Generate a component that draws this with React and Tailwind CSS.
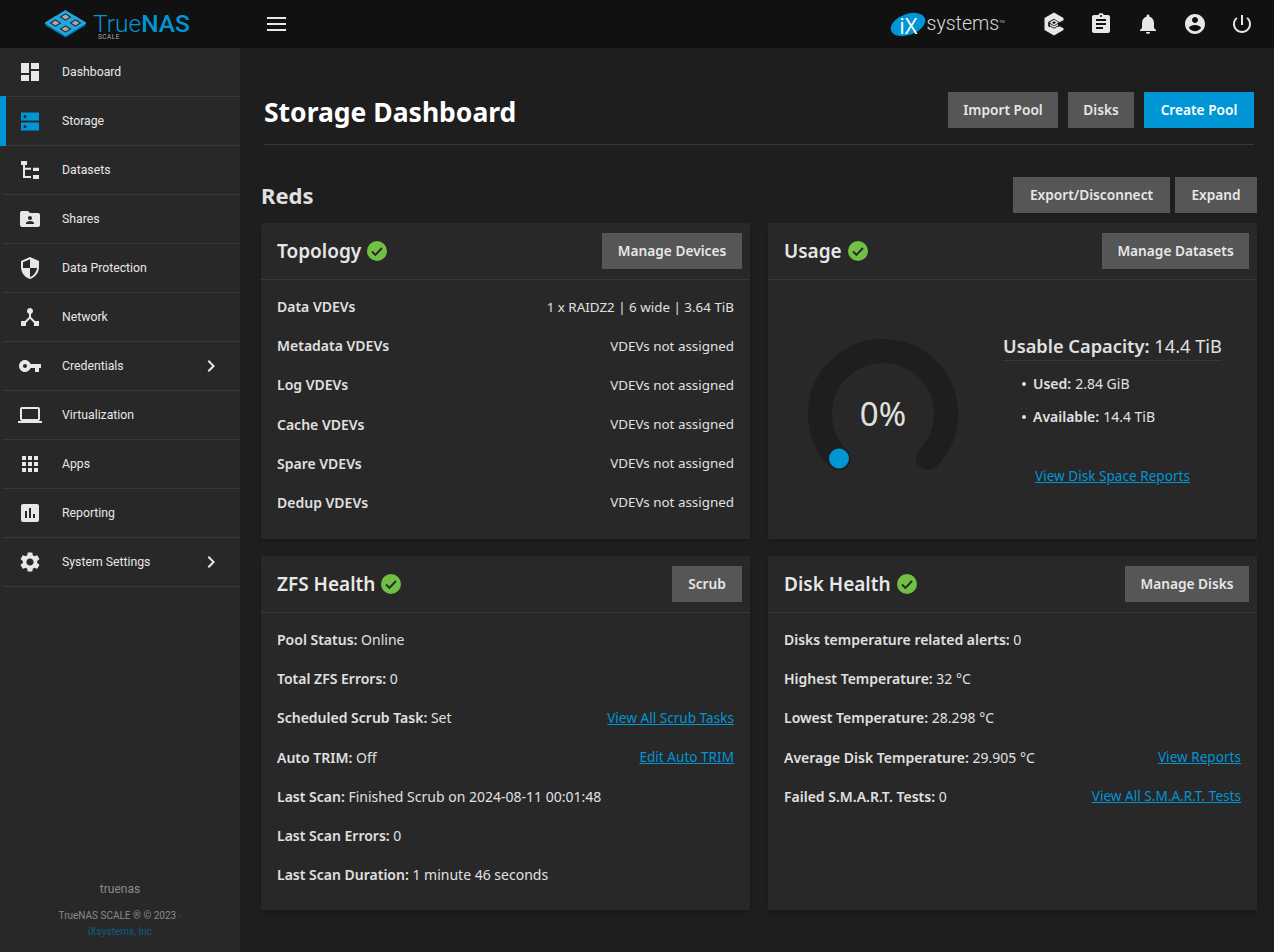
import React from 'react';

const navItems = [
  { label: 'Dashboard', d: 'M3 13h8V3H3v10zm0 8h8v-6H3v6zm10 0h8V11h-8v10zm0-18v6h8V3h-8z' },
  { label: 'Storage', d: 'M3 3.5h18v8H3v-8zm0 10h18v8H3v-8zM7 6a1.5 1.5 0 1 0 0 3 1.5 1.5 0 0 0 0-3zm0 10a1.5 1.5 0 1 0 0 3 1.5 1.5 0 0 0 0-3z', active: true },
  { label: 'Datasets', d: 'M3 3h6v4H7v2.7h6v2H7V18h6v2H5V7H3V3zm12 6.7h6V13h-6V9.7zm0 7.3h6v4h-6v-4z' },
  { label: 'Shares', d: 'M20 6h-8l-2-2H4c-1.1 0-2 .9-2 2v12c0 1.1.9 2 2 2h16c1.1 0 2-.9 2-2V8c0-1.1-.9-2-2-2zm-8 3c1.1 0 2 .9 2 2s-.9 2-2 2-2-.9-2-2 .9-2 2-2zm4 8H8v-1c0-1.33 2.67-2 4-2s4 .67 4 2v1z' },
  { label: 'Data Protection', d: 'M12 1L3 5v6c0 5.55 3.84 10.74 9 12 5.16-1.26 9-6.45 9-12V5l-9-4zm0 10.99h7c-.53 4.12-3.28 7.79-7 8.94V12H5V6.3l7-3.11v8.8z' },
  { label: 'Network', d: 'M17 16l-4-4V8.82C14.16 8.4 15 7.3 15 6c0-1.66-1.34-3-3-3S9 4.34 9 6c0 1.3.84 2.4 2 2.82V12l-4 4H3v5h5v-3.05l4-4.2 4 4.2V21h5v-5h-4z' },
  { label: 'Credentials', d: 'M12.65 10C11.83 7.67 9.61 6 7 6c-3.31 0-6 2.69-6 6s2.69 6 6 6c2.61 0 4.83-1.67 5.65-4H17v4h4v-4h2v-4H12.65zM7 14c-1.1 0-2-.9-2-2s.9-2 2-2 2 .9 2 2-.9 2-2 2z', arrow: true },
  { label: 'Virtualization', d: 'M20 18c1.1 0 1.99-.9 1.99-2L22 6c0-1.1-.9-2-2-2H4c-1.1 0-2 .9-2 2v10c0 1.1.9 2 2 2H0v2h24v-2h-4zM4 6h16v10H4V6z' },
  { label: 'Apps', d: 'M4 8h4V4H4v4zm6 12h4v-4h-4v4zm-6 0h4v-4H4v4zm0-6h4v-4H4v4zm6 0h4v-4h-4v4zm6-10v4h4V4h-4zm-6 4h4V4h-4v4zm6 6h4v-4h-4v4zm0 6h4v-4h-4v4z' },
  { label: 'Reporting', d: 'M19 3H5c-1.1 0-2 .9-2 2v14c0 1.1.9 2 2 2h14c1.1 0 2-.9 2-2V5c0-1.1-.9-2-2-2zM9 17H7v-7h2v7zm4 0h-2V7h2v10zm4 0h-2v-4h2v4z' },
  { label: 'System Settings', d: 'M19.14 12.94c.04-.3.06-.61.06-.94 0-.32-.02-.64-.07-.94l2.03-1.58c.18-.14.23-.41.12-.61l-1.92-3.32c-.12-.22-.37-.29-.59-.22l-2.39.96c-.5-.38-1.03-.7-1.62-.94l-.36-2.54c-.04-.24-.24-.41-.48-.41h-3.84c-.24 0-.43.17-.47.41l-.36 2.54c-.59.24-1.13.57-1.62.94l-2.39-.96c-.22-.08-.47 0-.59.22L2.74 8.87c-.12.21-.08.47.12.61l2.03 1.58c-.05.3-.09.63-.09.94s.02.64.07.94l-2.03 1.58c-.18.14-.23.41-.12.61l1.92 3.32c.12.22.37.29.59.22l2.39-.96c.5.38 1.03.7 1.62.94l.36 2.54c.05.24.24.41.48.41h3.84c.24 0 .44-.17.47-.41l.36-2.54c.59-.24 1.13-.56 1.62-.94l2.39.96c.22.08.47 0 .59-.22l1.92-3.32c.12-.22.07-.47-.12-.61l-2.01-1.58zM12 15.6c-1.98 0-3.6-1.62-3.6-3.6s1.62-3.6 3.6-3.6 3.6 1.62 3.6 3.6-1.62 3.6-3.6 3.6z', arrow: true },
];

const topology = ['Metadata VDEVs', 'Log VDEVs', 'Cache VDEVs', 'Spare VDEVs', 'Dedup VDEVs'];

function Icon({ d, className }) {
  return (
    <svg viewBox="0 0 24 24" className={className} fill="currentColor" fillRule="evenodd">
      <path d={d} />
    </svg>
  );
}

// four hollow tiles laid out as one big isometric diamond
function Logo() {
  const tiles = [[20.5, 7], [10.5, 13], [30.5, 13], [20.5, 19]];
  return (
    <svg viewBox="0 0 41 28" className="w-[41px] h-[28px] shrink-0">
      {tiles.map(([x, y]) => (
        <g key={`${x}-${y}`}>
          <polygon points={`${x - 10},${y} ${x},${y + 6.2} ${x + 10},${y} ${x + 10},${y + 2.4} ${x},${y + 8.6} ${x - 10},${y + 2.4}`} fill="#006f9f" />
          <polygon points={`${x},${y - 5.4} ${x + 8.6},${y} ${x},${y + 5.4} ${x - 8.6},${y}`} fill="#2a2a2a" stroke="#22a6e2" strokeWidth="2.8" />
          <polygon points={`${x},${y - 2.4} ${x + 3.8},${y} ${x},${y + 2.4} ${x - 3.8},${y}`} fill="#a9a9a9" />
        </g>
      ))}
    </svg>
  );
}

function Check() {
  return (
    <svg viewBox="0 0 20 20" className="w-5 h-5 ml-[6px]">
      <circle cx="10" cy="10" r="10" fill="#71bf44" />
      <path d="M5 10.5l3.4 3.4L15 7" fill="none" stroke="#282828" strokeWidth="1.9" />
    </svg>
  );
}

function Btn({ children, className = 'bg-[#565656]' }) {
  return (
    <button className={`h-9 flex items-center justify-center text-[13.7px] font-semibold text-[#e7e7e7] ${className}`}>
      {children}
    </button>
  );
}

function Card({ title, action, actionWidth, height, children }) {
  return (
    <section className={`bg-[#282828] shadow-md ${height}`}>
      <div className="h-[57px] flex items-center justify-between pl-4 pr-2 border-b border-[#383838]">
        <div className="flex items-center">
          <h3 className="text-[19px] font-semibold text-[#e7e7e7]">{title}</h3>
          <Check />
        </div>
        <Btn className={`bg-[#565656] ${actionWidth}`}>{action}</Btn>
      </div>
      {children}
    </section>
  );
}

function Row({ label, value, link, right }) {
  return (
    <div className="h-[39.2px] flex items-center justify-between text-[14px] text-[#e0e0e0]">
      <div>
        <b className="font-semibold">{label}</b> {value}
      </div>
      {link && <a className="underline text-[13.6px] text-[#0095d5]">{link}</a>}
      {right && <span className="text-[13.4px]">{right}</span>}
    </div>
  );
}

export default function App() {
  return (
    <div className="w-[1274px] h-[952px] overflow-hidden flex flex-col bg-[#1e1e1e] font-['Noto_Sans',sans-serif]">
      <header className="h-12 bg-[#111111] flex items-center shrink-0">
        <div className="w-[240px] shrink-0 flex items-center pl-[45px]">
          <Logo />
          <div className="ml-[7px] mt-[6px] flex flex-col font-['Roboto',sans-serif]">
            <div className="text-[24.5px] leading-[20px] text-[#0095d5]">
              <span className="font-light">True</span><span className="font-medium">NAS</span>
            </div>
            <div className="ml-[5px] text-[6.5px] leading-[6px] tracking-[0.5px] text-[#aaaaaa]">SCALE</div>
          </div>
        </div>
        <button className="ml-[27px] flex flex-col gap-[4px]">
          <span className="block w-[19px] h-[2px] bg-[#e7e7e7]" />
          <span className="block w-[19px] h-[2px] bg-[#e7e7e7]" />
          <span className="block w-[19px] h-[2px] bg-[#e7e7e7]" />
        </button>
        <div className="ml-auto flex items-center pr-[20px] text-[#e7e7e7]">
          <div className="flex items-center mr-[37px]">
            <div className="w-[36px] h-[21px] bg-[#0095d5] rounded-[50%] -rotate-[20deg] flex items-center justify-center">
              <span className="rotate-[20deg] text-white text-[22px] leading-none font-['Open_Sans',sans-serif]">iX</span>
            </div>
            <span className="ml-[1px] font-['Roboto',sans-serif] font-light text-[19.5px] leading-none text-[#d8d8d8]">systems</span>
            <span className="text-[4px] self-start mt-[5px] text-[#aaaaaa]">TM</span>
          </div>
          <svg viewBox="0 0 24 24" className="w-6 h-6" fill="none">
            <path d="M12 .5L21.5 6v2.2l-4 2L12 6.8 6.2 10v4.2L12 17.5l5.5-3.2 4 2V18L12 23.5 2.5 18V6z" fill="currentColor" />
            <path d="M12 8.4l3.4 2.2L12 12.8l-3.4-2.2zM8 12.6l4 2.5 4-2.5M8 15l4 2.6 4-2.6" stroke="currentColor" strokeWidth="1.3" />
          </svg>
          <Icon className="w-6 h-6 ml-[23px]" d="M19 3h-4.18C14.4 1.84 13.3 1 12 1c-1.3 0-2.4.84-2.82 2H5c-1.1 0-2 .9-2 2v14c0 1.1.9 2 2 2h14c1.1 0 2-.9 2-2V5c0-1.1-.9-2-2-2zm-7 0c.55 0 1 .45 1 1s-.45 1-1 1-1-.45-1-1 .45-1 1-1zm2 14H7v-2h7v2zm3-4H7v-2h10v2zm0-4H7V7h10v2z" />
          <Icon className="w-6 h-6 ml-[23px]" d="M12 22c1.1 0 2-.9 2-2h-4c0 1.1.89 2 2 2zm6-6v-5c0-3.07-1.64-5.64-4.5-6.32V4c0-.83-.67-1.5-1.5-1.5s-1.5.67-1.5 1.5v.68C7.63 5.36 6 7.92 6 11v5l-2 2v1h16v-1l-2-2z" />
          <Icon className="w-6 h-6 ml-[23px]" d="M12 2C6.48 2 2 6.48 2 12s4.48 10 10 10 10-4.48 10-10S17.52 2 12 2zm0 3c1.66 0 3 1.34 3 3s-1.34 3-3 3-3-1.34-3-3 1.34-3 3-3zm0 14.2c-2.5 0-4.71-1.28-6-3.22.03-1.99 4-3.08 6-3.08 1.99 0 5.97 1.09 6 3.08-1.29 1.94-3.5 3.22-6 3.22z" />
          <Icon className="w-6 h-6 ml-[23px]" d="M13 3h-2v10h2V3zm4.83 2.17l-1.42 1.42C17.99 7.86 19 9.81 19 12c0 3.87-3.13 7-7 7s-7-3.13-7-7c0-2.19 1.01-4.14 2.58-5.42L6.17 5.17C4.23 6.82 3 9.26 3 12c0 4.97 4.03 9 9 9s9-4.03 9-9c0-2.74-1.23-5.18-3.17-6.83z" />
        </div>
      </header>

      <div className="flex flex-1 min-h-0">
        <aside className="w-[240px] shrink-0 bg-[#282828] flex flex-col font-['Roboto',sans-serif]">
          <nav>
            {navItems.map((item) => (
              <a key={item.label} className="relative h-[49px] flex items-center border-b border-[#383838] ml-[3px] text-[#e7e7e7]">
                {item.active && <span className="absolute -left-[3px] -top-px -bottom-px w-[6px] bg-[#0095d5]" />}
                <Icon d={item.d} className={`w-6 h-6 ml-[15px] shrink-0 ${item.active ? 'text-[#0095d5]' : 'text-[#e7e7e7]'}`} />
                <span className="ml-[20px] text-[12.25px]">{item.label}</span>
                {item.arrow && (
                  <svg viewBox="0 0 24 24" className="w-6 h-6 absolute left-[196px]" fill="currentColor">
                    <path d="M10 6L8.59 7.41 13.17 12l-4.58 4.59L10 18l6-6z" />
                  </svg>
                )}
              </a>
            ))}
          </nav>
          <div className="mt-auto pb-[12px] text-center text-[#8a8a8a]">
            <div className="text-[12px] mb-[10px]">truenas</div>
            <div className="text-[10px] leading-[16px]">
              TrueNAS SCALE ® © 2023 <span className="text-[#0b5f85]">-</span>
              <br />
              <a className="text-[#0b5f85]">iXsystems, Inc</a>
            </div>
          </div>
        </aside>

        <main className="flex-1 min-w-0 pl-[21px] pr-[17px]">
          <div className="ml-[3px] mr-[3px] h-[97px] pt-[44px] flex items-start justify-between border-b border-[#383838]">
            <h1 className="text-[26.5px] leading-[40px] font-bold text-white">Storage Dashboard</h1>
            <div className="flex gap-[10px]">
              <Btn className="w-[110px] bg-[#565656]">Import Pool</Btn>
              <Btn className="w-[66px] bg-[#565656]">Disks</Btn>
              <Btn className="w-[110px] bg-[#0095d5] text-white">Create Pool</Btn>
            </div>
          </div>

          <div className="mt-[32px] h-[46px] flex items-start justify-between">
            <h2 className="text-[22px] leading-[36px] font-bold text-[#e0e0e0]">Reds</h2>
            <div className="flex gap-[5px]">
              <Btn className="w-[157px] bg-[#565656]">Export/Disconnect</Btn>
              <Btn className="w-[82px] bg-[#565656]">Expand</Btn>
            </div>
          </div>

          <div className="grid grid-cols-[489px_489px] gap-x-[18px] gap-y-[17px]">
            <Card title="Topology" action="Manage Devices" actionWidth="w-[140px]" height="h-[316px]">
              <div className="px-4 pt-[7px]">
                <Row label="Data VDEVs" right="1 x RAIDZ2 | 6 wide | 3.64 TiB" />
                {topology.map((t) => <Row key={t} label={t} right="VDEVs not assigned" />)}
              </div>
            </Card>

            <Card title="Usage" action="Manage Datasets" actionWidth="w-[147px]" height="h-[316px]">
              <div className="flex pl-[40px]">
                <svg viewBox="0 0 150 150" className="w-[150px] h-[150px] mt-[59px] shrink-0">
                  <path d="M30.5 119.5 A63 63 0 1 1 120 119" fill="none" stroke="#1e1e1e" strokeWidth="24" strokeLinecap="round" />
                  <circle cx="31" cy="119.5" r="10" fill="#0095d5" />
                  <text x="75" y="87" textAnchor="middle" fontSize="33" fill="#e0e0e0">0%</text>
                </svg>
                <div className="ml-[45px] w-[219px] text-[#e0e0e0]">
                  <div className="mt-[52px] pb-[1px] text-[18.25px] border-b border-[#383838] whitespace-nowrap">
                    <b className="font-semibold">Usable Capacity:</b> 14.4 TiB
                  </div>
                  <ul className="mt-[6px] ml-[19px] text-[14px]">
                    <li className="h-[33px] flex items-center">
                      <span className="w-[4px] h-[4px] rounded-full bg-[#e0e0e0] mr-[7px]" />
                      <b className="font-semibold mr-[4px]">Used:</b> 2.84 GiB
                    </li>
                    <li className="h-[33px] flex items-center">
                      <span className="w-[4px] h-[4px] rounded-full bg-[#e0e0e0] mr-[7px]" />
                      <b className="font-semibold mr-[4px]">Available:</b> 14.4 TiB
                    </li>
                  </ul>
                  <a className="block mt-[33px] text-center text-[13.6px] underline text-[#0095d5]">View Disk Space Reports</a>
                </div>
              </div>
            </Card>

            <Card title="ZFS Health" action="Scrub" actionWidth="w-[70px]" height="h-[354px]">
              <div className="px-4 pt-[7px]">
                <Row label="Pool Status:" value="Online" />
                <Row label="Total ZFS Errors:" value="0" />
                <Row label="Scheduled Scrub Task:" value="Set" link="View All Scrub Tasks" />
                <Row label="Auto TRIM:" value="Off" link="Edit Auto TRIM" />
                <Row label="Last Scan:" value="Finished Scrub on 2024-08-11 00:01:48" />
                <Row label="Last Scan Errors:" value="0" />
                <Row label="Last Scan Duration:" value="1 minute 46 seconds" />
              </div>
            </Card>

            <Card title="Disk Health" action="Manage Disks" actionWidth="w-[124px]" height="h-[354px]">
              <div className="px-4 pt-[7px]">
                <Row label="Disks temperature related alerts:" value="0" />
                <Row label="Highest Temperature:" value="32 °C" />
                <Row label="Lowest Temperature:" value="28.298 °C" />
                <Row label="Average Disk Temperature:" value="29.905 °C" link="View Reports" />
                <Row label="Failed S.M.A.R.T. Tests:" value="0" link="View All S.M.A.R.T. Tests" />
              </div>
            </Card>
          </div>
        </main>
      </div>
    </div>
  );
}
